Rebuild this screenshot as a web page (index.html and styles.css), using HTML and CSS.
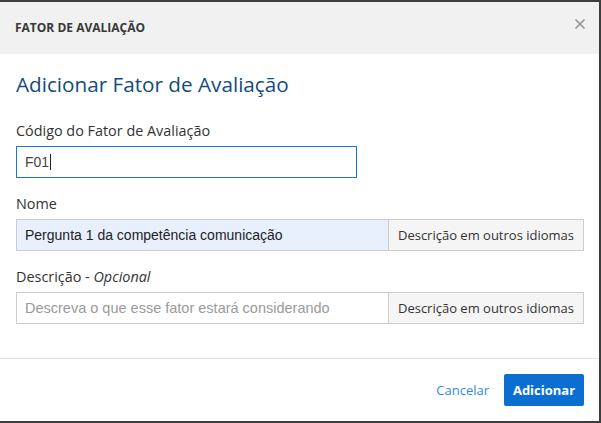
FILE: index.html
```html
<!DOCTYPE html>
<html lang="pt">
<head>
<meta charset="utf-8">
<link rel="stylesheet" href="styles.css">
</head>
<body>
<div class="frame">
  <div class="modal-header">
    <span class="modal-title">FATOR DE AVALIAÇÃO</span>
    <svg class="close" width="10" height="10" viewBox="0 0 10 10" aria-label="Fechar"><path d="M0.5 0.5 L9.5 9.5 M9.5 0.5 L0.5 9.5" stroke="#9a9a9a" stroke-width="1.6" fill="none"/></svg>
  </div>
  <div class="modal-body">
    <h1 class="heading">Adicionar Fator de Avaliação</h1>
    <div class="field">
      <label class="label">Código do Fator de Avaliação</label>
      <div class="input code focus">F01<span class="caret"></span></div>
    </div>
    <div class="field">
      <label class="label">Nome</label>
      <div class="group">
        <div class="input grow autofill">Pergunta 1 da competência comunicação</div>
        <div class="addon">Descrição em outros idiomas</div>
      </div>
    </div>
    <div class="field">
      <label class="label">Descrição - <em>Opcional</em></label>
      <div class="group">
        <div class="input grow placeholder">Descreva o que esse fator estará considerando</div>
        <div class="addon">Descrição em outros idiomas</div>
      </div>
    </div>
  </div>
  <div class="modal-footer">
    <span class="link">Cancelar</span>
    <span class="btn-primary">Adicionar</span>
  </div>
</div>
</body>
</html>
```
FILE: styles.css
```css
* { box-sizing: border-box; }
html, body { margin: 0; padding: 0; background: #fff; }
body { font-family: "Open Sans", "Liberation Sans", sans-serif; color: #333; }
.frame {
  width: 601px;
  height: 423px;
  border-top: 2px solid #3d3d3d;
  border-right: 2px solid #3d3d3d;
  border-bottom: 2px solid #3d3d3d;
  display: flex;
  flex-direction: column;
  background: #fff;
}
.modal-header {
  height: 52px;
  background: #f1f1f1;
  display: flex;
  align-items: center;
  justify-content: space-between;
  padding: 0 14px 0 15px;
}
.modal-title {
  font-size: 12px;
  font-weight: 700;
  color: #383838;
  margin-top: -2px;
}
.close {
  display: block;
  margin-top: -8px;
}
.modal-body {
  padding: 16px 15px 34px 16px;
  border-bottom: 1px solid #e2e2e2;
}
.heading {
  margin: 0 0 23px;
  font-size: 20.7px;
  font-weight: 400;
  color: #134b7e;
  line-height: 28px;
}
.field { margin-bottom: 16px; }
.field:last-child { margin-bottom: 0; }
.label {
  display: block;
  font-size: 14.4px;
  line-height: 20px;
  color: #333;
  margin-bottom: 5px;
}
.label em { font-style: italic; }
.input {
  height: 32px;
  border: 1px solid #ccc;
  padding: 0 8px;
  font-family: "Liberation Sans", Arial, sans-serif;
  font-size: 14px;
  color: #444;
  display: flex;
  align-items: center;
  background: #fff;
}
.code { width: 341px; }
.focus { border-color: #1976d2; }
.caret {
  display: inline-block;
  width: 1px;
  height: 16px;
  background: #222;
  margin-left: 1px;
}
.group { display: flex; width: 568px; }
.grow { flex: 1; }
.autofill { background: #e8f0fe; color: #222; }
.placeholder { color: #9a9a9a; font-size: 14.5px; }
.addon {
  width: 195px;
  height: 32px;
  border: 1px solid #ccc;
  border-left: none;
  background: #f5f5f5;
  font-size: 13px;
  color: #333;
  display: flex;
  align-items: center;
  justify-content: center;
}
.modal-footer {
  display: flex;
  justify-content: flex-end;
  align-items: center;
  gap: 15px;
  padding: 15px 15px 0 0;
}
.link {
  font-size: 13px;
  color: #2e8bdf;
}
.btn-primary {
  height: 32px;
  width: 80px;
  background: #0a6fd1;
  color: #fff;
  font-size: 13px;
  font-weight: 700;
  display: flex;
  align-items: center;
  justify-content: center;
  border-radius: 2px;
}
```
